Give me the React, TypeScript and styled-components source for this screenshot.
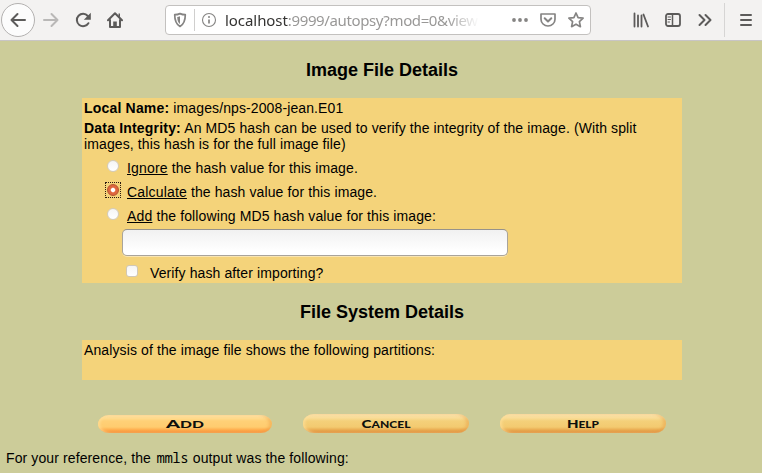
import React from 'react';
import styled, { createGlobalStyle } from 'styled-components';

const GlobalStyle = createGlobalStyle`
  * { box-sizing: border-box; }
  body {
    margin: 0;
    background: #cccc99;
    color: #000;
    font: 14px/16px "Liberation Sans", Arial, sans-serif;
    letter-spacing: 0.11px;
    overflow: hidden;
  }
`;

const Window = styled.div`
  width: 762px;
  height: 473px;
  overflow: hidden;
  display: flex;
  flex-direction: column;
`;

const Toolbar = styled.header`
  flex: none;
  height: 41px;
  display: flex;
  align-items: center;
  padding-left: 1px;
  background: #f3f2f1;
  border-bottom: 1px solid #c8c5c5;
  color: #5c5b5a;
`;

const ToolButton = styled.button<{ $width: number; $round?: boolean; $dim?: boolean }>`
  flex: none;
  width: ${(p) => p.$width}px;
  height: 34px;
  padding: 0;
  display: flex;
  align-items: center;
  justify-content: center;
  border: ${(p) => (p.$round ? '1px solid #b3b1b0' : '0')};
  border-radius: ${(p) => (p.$round ? '50%' : '0')};
  background: ${(p) => (p.$round ? '#fcfcfc' : 'transparent')};
  color: ${(p) => (p.$dim ? '#b9b8b7' : 'inherit')};
`;

const Glyph = styled.svg`
  display: block;
  flex: none;
  fill: none;
  stroke: currentColor;
  stroke-width: 2;
  stroke-linecap: round;
  stroke-linejoin: round;
`;

const AddressBar = styled.div`
  flex: none;
  width: 426px;
  height: 30px;
  margin-left: 34px;
  padding: 0 6px 0 6px;
  display: flex;
  align-items: center;
  border: 1px solid #c3c1bf;
  border-radius: 4px;
  background: #fff;
  color: #858483;
`;

const AddressDivider = styled.span`
  width: 1px;
  height: 22px;
  margin: 0 6px 0 6px;
  background: #d0cfce;
`;

const Url = styled.div`
  width: 256px;
  margin-left: 8px;
  overflow: hidden;
  white-space: nowrap;
  font: 15px/22px "Noto Sans", sans-serif;
  color: #999897;
  mask-image: linear-gradient(to right, #000 222px, transparent 254px);
`;

const UrlPart = styled.span<{ $host?: boolean }>`
  color: ${(p) => (p.$host ? '#343332' : '#999897')};
  letter-spacing: ${(p) => (p.$host ? '-0.06px' : '-0.38px')};
`;

const AddressActions = styled.div`
  margin-left: auto;
  display: flex;
  align-items: center;
  gap: 12px;
`;

const Tools = styled.div`
  margin-left: 42px;
  display: flex;
  align-items: center;
  gap: 16px;
`;

const ToolDivider = styled.span`
  width: 1px;
  height: 34px;
  margin: 0 15px 0 11px;
  background: #d6d5d4;
`;

const Page = styled.main`
  flex: 1;
  display: flex;
  flex-direction: column;
`;

const Heading = styled.h2`
  height: 57px;
  margin: 0;
  padding: 18px 0 0 2px;
  font-size: 18px;
  line-height: 22px;
  letter-spacing: 0;
  text-align: center;
`;

const Panel = styled.section<{ $height: number }>`
  width: 600px;
  height: ${(p) => p.$height}px;
  margin-left: 82px;
  padding: 2px;
  background: #f4d37a;
`;

const Line = styled.p`
  margin: 0 0 4px;
`;

const Term = styled.b`
  letter-spacing: 0.19px;
`;

const Keyword = styled.u`
  letter-spacing: 0.17px;
`;

const Choice = styled.label`
  height: 16px;
  display: flex;
  align-items: flex-start;
  margin: 8px 0 0 21px;
  white-space: pre;
`;

const RadioFrame = styled.span<{ $focused: boolean }>`
  width: 16px;
  height: 16px;
  margin: -2px 6px 0 0;
  padding: 2px 0 0 2px;
  display: flex;
  align-items: flex-start;
  outline: ${(p) => (p.$focused ? '1px dotted #2a1a10' : 'none')};
  outline-offset: -1px;
`;

const Radio = styled.input`
  appearance: none;
  width: 12px;
  height: 12px;
  margin: 0;
  border: 1px solid #d3ccbd;
  border-radius: 50%;
  background: linear-gradient(#f5f5f5, #fff);
  &:checked {
    border-color: #b5552f;
    background: radial-gradient(circle, #fff 0 1.6px, #e0683f 2.8px, #d9623c 100%);
  }
`;

const HashInput = styled.input`
  display: block;
  width: 386px;
  height: 27px;
  margin: 5px 0 0 38px;
  padding: 0 6px;
  border: 1px solid #a9a49b;
  border-top-color: #96928b;
  border-radius: 5px;
  background: linear-gradient(#f1f1f1, #fff 85%);
  box-shadow: 0 1px 0 #f9e5b3;
`;

const VerifyRow = styled.label`
  height: 16px;
  margin: 9px 0 0 42px;
  display: flex;
  gap: 12px;
`;

const Checkbox = styled.input`
  appearance: none;
  width: 12px;
  height: 12px;
  margin: 0;
  border: 1px solid #d0c8b8;
  border-radius: 3px;
  background: linear-gradient(#f5f5f5, #fff);
`;

const Actions = styled.div`
  height: 68px;
  padding: 34px 0 0 98px;
  display: flex;
  align-items: flex-start;
`;

const PillButton = styled.button<{ $hot?: boolean }>`
  flex: none;
  width: ${(p) => (p.$hot ? 174 : 166)}px;
  height: ${(p) => (p.$hot ? 18 : 19)}px;
  margin-top: ${(p) => (p.$hot ? 1 : 0)}px;
  margin-right: 31px;
  padding: 0;
  border: 0;
  border-radius: 11px / 9px;
  background: ${(p) => (p.$hot
    ? 'linear-gradient(#ffe5ab 0, #ffdc8f 3px, #ffd077 6px, #ffcc6f 12px, #ffab4b 15px, #f58b35 100%)'
    : 'linear-gradient(#fae5b2 0, #f9dc95 4px, #f4d07a 7px, #f3ca70 13px, #e9aa50 16px, #dc8b3a 100%)')};
  box-shadow: inset 2px 0 3px rgba(255, 224, 155, 0.65), inset -3px 0 3px rgba(226, 132, 48, 0.3);
`;

const Caption = styled.svg`
  display: block;
  width: 100%;
  height: 100%;
  fill: #10100c;
  font-family: "Lato", sans-serif;
  font-weight: 900;
  letter-spacing: 0;
`;

const Reference = styled.p`
  margin: 2px 0 0 6px;
`;

const Mono = styled.code`
  margin: 0 0.5px 0 1.5px;
  font: 14px/14px "Noto Sans Mono", "DejaVu Sans Mono", monospace;
  letter-spacing: -0.45px;
`;

type Action = { label: string; size: number; small: number; width: number; hot?: boolean };

const actions: Action[] = [
  { label: 'Add', size: 11.5, small: 9, width: 38, hot: true },
  { label: 'Cancel', size: 12, small: 9.5, width: 49 },
  { label: 'Help', size: 12, small: 9.5, width: 32 },
];

function Pill({ label, size, small, width, hot }: Action) {
  const total = hot ? 174 : 166;
  return (
    <PillButton $hot={hot} aria-label={label}>
      <Caption viewBox={`0 0 ${total} ${hot ? 18 : 19}`}>
        <text x={(total - width) / 2} y={hot ? 12.5 : 13.5} textLength={width} lengthAdjust="spacingAndGlyphs">
          <tspan fontSize={size}>{label[0]}</tspan>
          <tspan fontSize={small}>{label.slice(1).toUpperCase()}</tspan>
        </text>
      </Caption>
    </PillButton>
  );
}

const choices = [
  { key: 'Ignore', rest: ' the hash value for this image.' },
  { key: 'Calculate', rest: ' the hash value for this image.' },
  { key: 'Add', rest: ' the following MD5 hash value for this image:' },
];

function BrowserToolbar() {
  return (
    <Toolbar>
      <ToolButton $width={34} $round aria-label="Back">
        <Glyph width="16" height="16" viewBox="0 0 16 16"><path d="M15 8H1.5M7.5 2L1.5 8l6 6" /></Glyph>
      </ToolButton>
      <ToolButton $width={32} $dim aria-label="Forward">
        <Glyph width="16" height="16" viewBox="0 0 16 16"><path d="M1 8h13.5M8.5 2l6 6-6 6" /></Glyph>
      </ToolButton>
      <ToolButton $width={32} aria-label="Reload">
        <Glyph width="16" height="16" viewBox="0 0 16 16">
          <path d="M13.4 11.2A6.2 6.2 0 1 1 12.8 4" />
          <path d="M15.8 0.8v7H8.8z" fill="currentColor" stroke="none" />
        </Glyph>
      </ToolButton>
      <ToolButton $width={32} aria-label="Home">
        <Glyph width="16" height="16" viewBox="0 0 16 16">
          <path d="M1 8.2L8 1.3l7 6.9M3 8v7h10V8" />
          <path d="M6.2 15V9.5h3.6V15zM11.5 1.5H13v4l-1.5-1.4z" fill="currentColor" stroke="none" />
        </Glyph>
      </ToolButton>
      <AddressBar>
        <Glyph width="16" height="16" viewBox="0 0 16 16">
          <path d="M8 1.6c1.8.8 3.8 1.1 5.3 1.1 0 5.4-1 9.2-5.3 11.8C3.7 11.9 2.7 8.1 2.7 2.7 4.2 2.7 6.2 2.4 8 1.6z" strokeWidth="1.7" />
          <path d="M8 4.3v7.8C5.9 10.5 5.4 8.5 5.2 5c1 0 2-.3 2.8-.7z" fill="currentColor" stroke="none" />
        </Glyph>
        <AddressDivider />
        <Glyph width="16" height="16" viewBox="0 0 16 16">
          <circle cx="8" cy="8" r="6.5" strokeWidth="1.1" />
          <path d="M8 7.5v4" strokeWidth="1.7" strokeLinecap="butt" />
          <circle cx="8" cy="4.9" r="1" fill="currentColor" stroke="none" />
        </Glyph>
        <Url><UrlPart $host>localhost</UrlPart><UrlPart>:9999/autopsy?mod=0&amp;view</UrlPart></Url>
        <AddressActions>
          <Glyph width="16" height="16" viewBox="0 0 16 16">
            <g fill="currentColor" stroke="none"><circle cx="2" cy="8" r="1.9" /><circle cx="8" cy="8" r="1.9" /><circle cx="14" cy="8" r="1.9" /></g>
          </Glyph>
          <Glyph width="16" height="16" viewBox="0 0 16 16">
            <path d="M1 2h14v5.2a7 6.8 0 0 1-14 0z" strokeWidth="1.7" /><path d="M4.7 6.3L8 9.5l3.3-3.2" />
          </Glyph>
          <Glyph width="16" height="16" viewBox="0 0 16 16">
            <path d="M8 1l2.1 4.6 5 .6-3.7 3.5 1 5L8 12.2l-4.4 2.5 1-5L0.9 6.2l5-.6z" strokeWidth="1.7" />
          </Glyph>
        </AddressActions>
      </AddressBar>
      <Tools>
        <Glyph width="16" height="16" viewBox="0 0 16 16" strokeLinecap="butt">
          <path d="M1.5 1.5v13M5 3.5v11M8.5 3.5v11M10.5 2.5l4.5 12" strokeWidth="1.8" />
        </Glyph>
        <Glyph width="16" height="16" viewBox="0 0 16 16">
          <rect x="1" y="2" width="14" height="12" rx="2" strokeWidth="1.8" />
          <path d="M7.5 2v12" strokeWidth="1.5" /><path d="M3 5h2.5M3 7.5h2.5M3 10h1.5" strokeWidth="1" />
        </Glyph>
        <Glyph width="16" height="16" viewBox="0 0 16 16"><path d="M2.5 3l5 5-5 5M8.5 3l5 5-5 5" /></Glyph>
      </Tools>
      <ToolDivider />
      <Glyph width="12" height="16" viewBox="0 0 12 16"><path d="M1 3h10M1 8h10M1 13h10" /></Glyph>
    </Toolbar>
  );
}

export default function App() {
  return (
    <Window>
      <GlobalStyle />
      <BrowserToolbar />
      <Page>
        <Heading>Image File Details</Heading>
        <Panel $height={185}>
          <Line><Term>Local Name:</Term> images/nps-2008-jean.E01</Line>
          <Line><Term>Data Integrity:</Term> An MD5 hash can be used to verify the integrity of the image. (With split images, this hash is for the full image file)</Line>
          {choices.map(({ key, rest }) => (
            <Choice key={key}>
              <RadioFrame $focused={key === 'Calculate'}>
                <Radio type="radio" name="hash" defaultChecked={key === 'Calculate'} />
              </RadioFrame>
              <Keyword>{key}</Keyword>{rest}
            </Choice>
          ))}
          <HashInput type="text" aria-label="MD5 hash value" />
          <VerifyRow><Checkbox type="checkbox" />Verify hash after importing?</VerifyRow>
        </Panel>
        <Heading>File System Details</Heading>
        <Panel $height={40}>
          <Line>Analysis of the image file shows the following partitions:</Line>
        </Panel>
        <Actions>{actions.map((action) => <Pill key={action.label} {...action} />)}</Actions>
        <Reference>For your reference, the <Mono>mmls</Mono> output was the following:</Reference>
      </Page>
    </Window>
  );
}
